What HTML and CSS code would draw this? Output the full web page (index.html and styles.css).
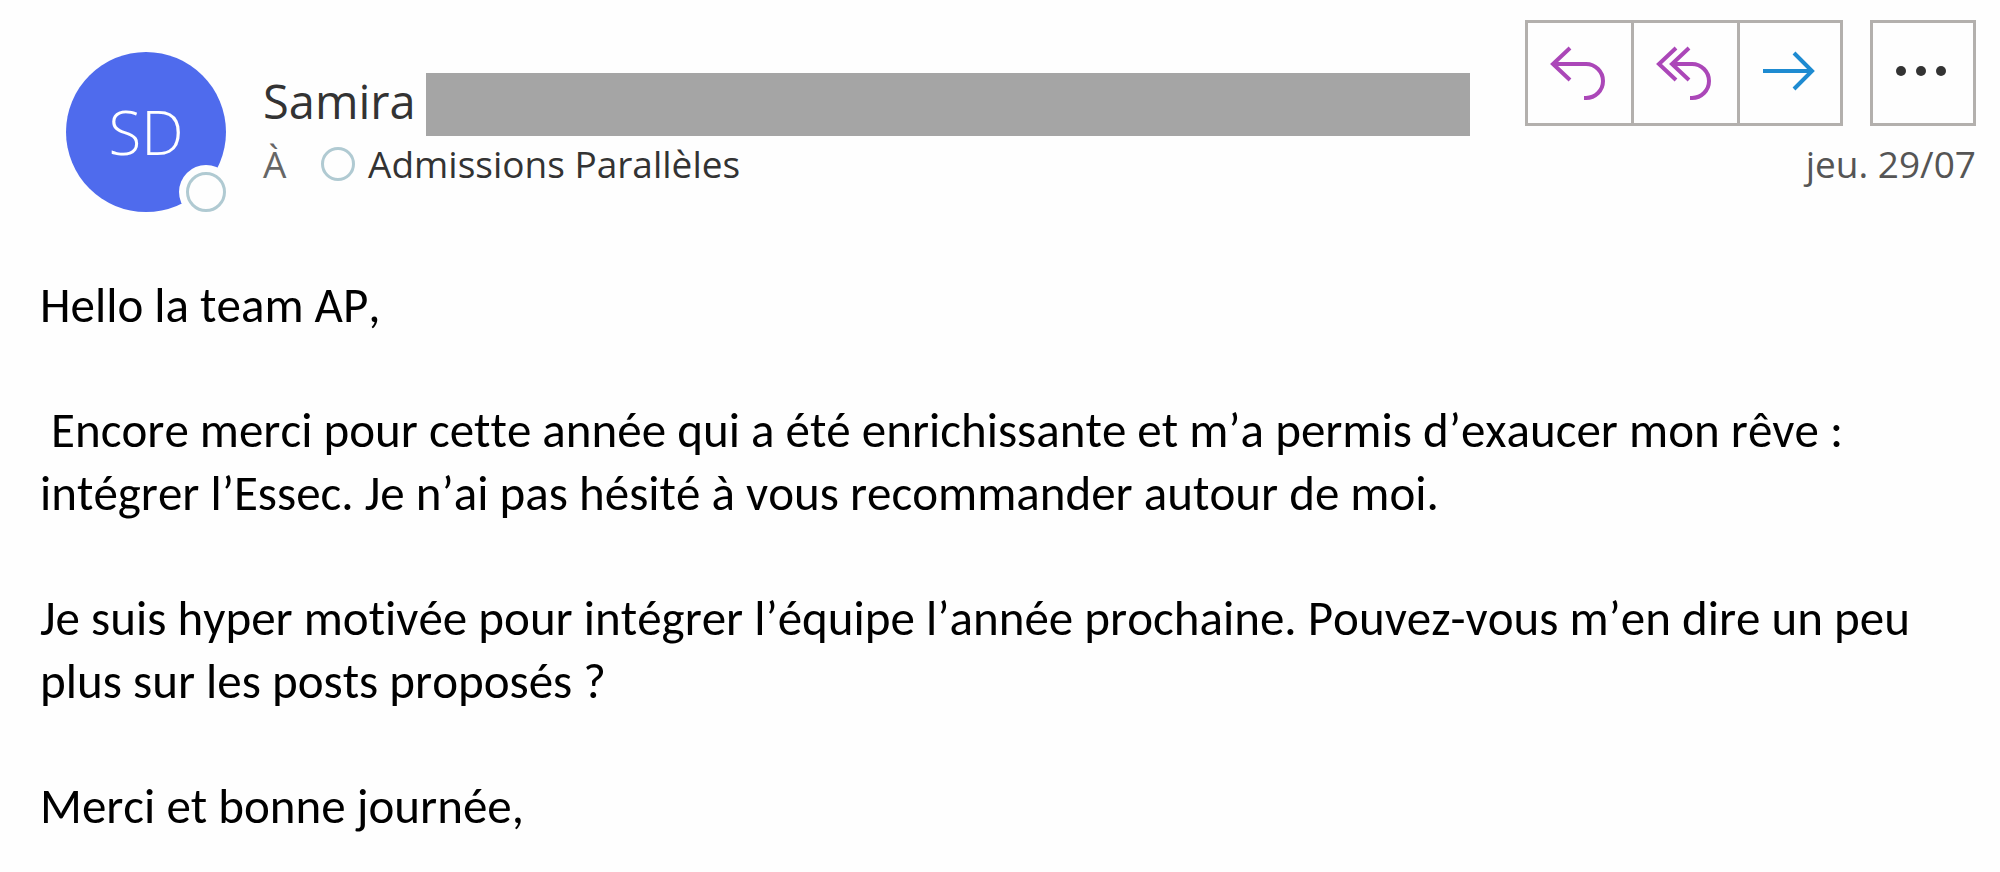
FILE: index.html
```html
<!DOCTYPE html>
<html lang="fr">
<head>
    <meta charset="utf-8" />
    <title>Message</title>
    <meta name="viewport" content="width=device-width, initial-scale=1">
    <link rel="stylesheet" href="styles.css">
</head>
<body>
    <div class="mail">
        <header class="mail-header">
            <div class="avatar">
                <span>SD</span>
                <i class="presence avatar-presence"></i>
            </div>
            <div class="people">
                <div class="sender">
                    <h1>Samira</h1>
                    <div class="redacted"></div>
                </div>
                <div class="recipient">
                    <span class="to">À</span>
                    <i class="presence"></i>
                    <span>Admissions Parallèles</span>
                </div>
            </div>
            <div class="side">
                <div class="actions">
                    <div class="group">
                        <button type="button" class="reply" aria-label="Répondre">
                            <svg viewBox="0 0 100 100"><path d="M42 25 L25 41 L42 57 M25 41 H58 A17 17 0 0 1 58 75 H56"/></svg>
                        </button>
                        <button type="button" class="reply" aria-label="Répondre à tous">
                            <svg viewBox="0 0 100 100"><path d="M42 25 L25 41 L42 57 M55 25 L38 41 L55 57 M38 41 H58 A17 17 0 0 1 58 75 H56"/></svg>
                        </button>
                        <button type="button" class="forward" aria-label="Transférer">
                            <svg viewBox="0 0 100 100"><path d="M23 48 H72 M54 30 L72 48 L54 66"/></svg>
                        </button>
                    </div>
                    <div class="group">
                        <button type="button" class="more" aria-label="Autres actions">
                            <svg viewBox="0 0 100 100"><circle cx="28" cy="48" r="5"/><circle cx="48" cy="48" r="5"/><circle cx="68" cy="48" r="5"/></svg>
                        </button>
                    </div>
                </div>
                <time datetime="07-29">jeu. 29/07</time>
            </div>
        </header>
        <div class="mail-body">
            <p>Hello la team AP,</p>
            <p>&nbsp;Encore merci pour cette année qui a été enrichissante et m’a permis d’exaucer mon rêve&nbsp;: intégrer l’Essec. Je n’ai pas hésité à vous recommander autour de moi.</p>
            <p>Je suis hyper motivée pour intégrer l’équipe l’année prochaine. Pouvez-vous m’en dire un peu plus sur les posts proposés&nbsp;?</p>
            <p>Merci et bonne journée,</p>
        </div>
    </div>
</body>
</html>
```
FILE: styles.css
```css
body,h1,p{
    margin: 0;
}
body{
    background: #fefefe;
    color: #000;
    font-family: "Open Sans", "Noto Sans", sans-serif;
}
.mail{
    padding: 20px 24px 20px 40px;
}
.mail-header{
    display: flex;
    align-items: flex-start;
}
.avatar{
    position: relative;
    display: flex;
    flex: none;
    align-items: center;
    justify-content: center;
    width: 160px;
    height: 160px;
    margin: 32px 37px 0 26px;
    border-radius: 50%;
    background: #4f6bed;
    color: #fff;
    font-size: 60px;
    font-weight: 300;
}
.presence{
    box-sizing: border-box;
    flex: none;
    width: 34px;
    height: 34px;
    border: 3px solid #b0cad2;
    border-radius: 50%;
    background: #fefefe;
}
/* pastille posée sur le bord de l'avatar */
.avatar-presence{
    position: absolute;
    right: 0;
    bottom: 0;
    width: 40px;
    height: 40px;
    box-shadow: 0 0 0 7px #fefefe;
}
.people{
    flex: 1;
    margin-top: 53px;
}
.sender{
    display: flex;
    align-items: flex-start;
}
.sender h1{
    color: #333;
    font-size: 47px;
    font-weight: 400;
    line-height: 56px;
}
.redacted{
    flex: 1;
    height: 63px;
    margin-left: 10px;
    background: #a5a5a5;
}
.recipient{
    display: flex;
    align-items: center;
    color: #333;
    font-size: 37px;
    line-height: 56px;
}
.recipient .to{
    width: 58px;
    color: #666;
}
.recipient .presence{
    margin-right: 13px;
}
.side{
    flex: none;
    margin-left: 55px;
    color: #555;
    font-size: 37px;
    line-height: 56px;
    text-align: right;
}
.side time{
    display: block;
    margin-top: 10px;
}
.actions{
    display: flex;
    gap: 27px;
}
.group{
    display: flex;
    border: 3px solid #b3b0ad;
}
.group button{
    box-sizing: content-box;
    width: 100px;
    height: 100px;
    padding: 0;
    border: 0;
    background: none;
}
.group button + button{
    border-left: 3px solid #b3b0ad;
}
.group .reply{
    width: 103px;
}
.group svg{
    display: block;
    width: 100px;
    height: 100px;
    fill: none;
    stroke-width: 4;
}
.reply{
    stroke: #ab47b8;
}
.forward{
    stroke: #1e8bd1;
}
.more svg{
    fill: #333;
}
.mail-body{
    padding-top: 62px;
    font-family: Calibri, Carlito, Lato, sans-serif;
    font-size: 49px;
    font-kerning: none;
    font-variant-ligatures: none;
    line-height: 63px;
}
.mail-body p{
    margin-bottom: 62px;
}
.mail-body p:last-child{
    margin-bottom: 0;
}
```
